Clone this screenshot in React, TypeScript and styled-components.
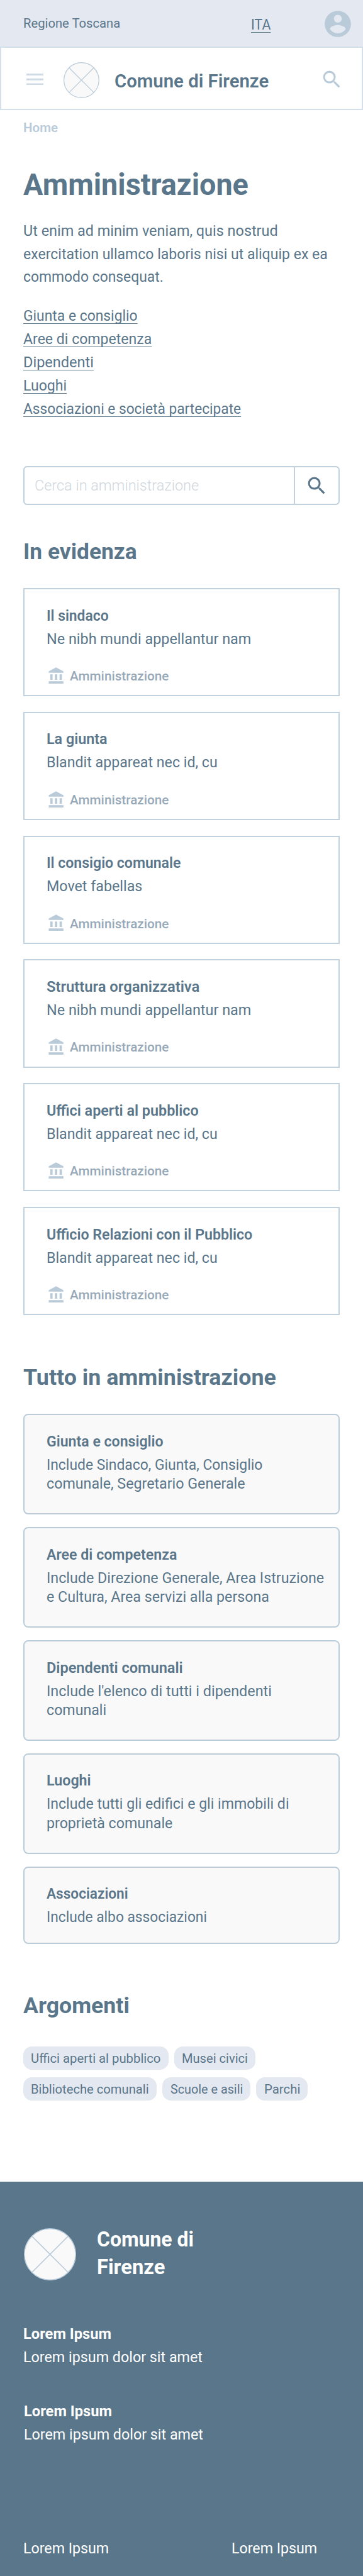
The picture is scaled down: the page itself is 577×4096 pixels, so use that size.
import React, { useLayoutEffect, useRef, useState } from "react";
import styled, { createGlobalStyle, css } from "styled-components";

/* Design units are 750 wide; the page is laid out at this fraction of that. */
const UNIT = 0.7689;
const u = (n: number) => `${+(n * UNIT).toFixed(3)}px`;

const color = {
  ink: "#5a768a",
  line: "#b9cad9",
  lineSoft: "#cedae5",
  border: "#c2d1de",
  borderSoft: "#d5dfe9",
  pale: "#e4e8f0",
  panel: "#f9f9f9",
  muted: "#97a9b8",
  placeholder: "#d0d7dd",
};

const GlobalStyle = createGlobalStyle`
  *, *::before, *::after { box-sizing: border-box; }
  html, body { margin: 0; padding: 0; background: #fff; }
  body { font-family: Roboto, "Liberation Sans", sans-serif; font-weight: 400; color: ${color.ink}; }
  h1, h2, h3, p, ul { margin: 0; padding: 0; font-weight: inherit; font-size: inherit; }
  ul { list-style: none; }
  a { color: inherit; text-decoration: none; }
  svg { display: block; flex: none; }
`;

/* ---------- condensed text line ---------- */

const LineBox = styled.span<{ $w: number }>`
  display: block;
  width: ${(p) => u(p.$w)};
  white-space: nowrap;
`;

const LineInk = styled.span<{ $underline?: boolean }>`
  display: inline-block;
  vertical-align: top;
  transform-origin: 0 50%;
  ${(p) =>
    p.$underline &&
    css`
      text-decoration: underline;
      text-decoration-thickness: 1px;
      text-underline-offset: ${u(5)};
      text-decoration-skip-ink: none;
    `}
`;

/* Condenses one line of text so that it takes exactly `w` design units. */
function Line({ w, underline, children }: { w: number; underline?: boolean; children: string }) {
  const ink = useRef<HTMLSpanElement>(null);
  const [scale, setScale] = useState(1);
  useLayoutEffect(() => {
    const natural = ink.current ? ink.current.offsetWidth : 0;
    if (natural > 0) setScale((w * UNIT) / natural);
  }, [w, children]);
  return (
    <LineBox $w={w}>
      <LineInk ref={ink} $underline={underline} style={{ transform: `scaleX(${scale})` }}>
        {children}
      </LineInk>
    </LineBox>
  );
}

/* ---------- icons ---------- */

const SearchIcon = ({ fill }: { fill: string }) => (
  <svg width={48 * UNIT} height={48 * UNIT} viewBox="0 0 24 24" fill={fill}>
    <path d="M15.5 14h-.79l-.28-.27A6.471 6.471 0 0 0 16 9.5 6.5 6.5 0 1 0 9.5 16c1.61 0 3.09-.59 4.23-1.57l.27.28v.79l5 4.99L20.49 19l-4.99-5zm-6 0C7.01 14 5 11.99 5 9.5S7.01 5 9.5 5 14 7.01 14 9.5 11.99 14 9.5 14z" />
  </svg>
);

const AccountIcon = () => (
  <svg width={65 * UNIT} height={65 * UNIT} viewBox="0 0 24 24" fill={color.line}>
    <path d="M12 2C6.48 2 2 6.48 2 12s4.48 10 10 10 10-4.48 10-10S17.52 2 12 2zm0 3c1.66 0 3 1.34 3 3s-1.34 3-3 3-3-1.34-3-3 1.34-3 3-3zm0 14.2c-2.5 0-4.71-1.28-6-3.22.03-1.99 4-3.08 6-3.08 1.99 0 5.97 1.09 6 3.08-1.29 1.94-3.5 3.22-6 3.22z" />
  </svg>
);

const MenuIcon = () => (
  <svg width={36 * UNIT} height={24 * UNIT} viewBox="0 0 36 24" fill={color.lineSoft}>
    <path d="M0 0h36v4H0zM0 10h36v4H0zM0 20h36v4H0z" />
  </svg>
);

const BankIcon = () => (
  <svg width={38.4 * UNIT} height={38.4 * UNIT} viewBox="0 0 24 24" fill={color.line}>
    <path d="M4 10v7h3v-7H4zm6 0v7h3v-7h-3zM2 22h19v-3H2v3zm14-12v7h3v-7h-3zm-4.5-9L2 6v2h19V6l-9.5-5z" />
  </svg>
);

const Emblem = ({ size, stroke }: { size: number; stroke: number }) => {
  const r = (size - stroke) / 2;
  const c = size / 2;
  const d = r * Math.SQRT1_2;
  return (
    <svg width={size * UNIT} height={size * UNIT} viewBox={`0 0 ${size} ${size}`} fill="none" stroke={color.line} strokeWidth={stroke}>
      <circle cx={c} cy={c} r={r} fill={color.panel} />
      <path d={`M${c - d} ${c - d}L${c + d} ${c + d}M${c + d} ${c - d}L${c - d} ${c + d}`} />
    </svg>
  );
};

/* ---------- layout ---------- */

const Page = styled.div`
  width: 577px;
  height: 4096px;
  overflow: hidden;
  display: flex;
  flex-direction: column;
  background: #fff;
`;

const TopBar = styled.div`
  flex: none;
  height: ${u(96)};
  padding: 0 ${u(19.5)} 0 ${u(48)};
  display: flex;
  align-items: center;
  background: ${color.pale};
`;

const Region = styled.div`
  font-size: ${u(27)};
  line-height: ${u(40)};
`;

const Language = styled.a`
  margin: ${u(7)} ${u(105.5)} 0 auto;
  font-size: ${u(30.8)};
  line-height: ${u(48)};
`;

const AccountSlot = styled.div`
  margin-top: ${u(4)};
`;

const Header = styled.header`
  flex: none;
  height: ${u(132)};
  padding: ${u(8)} ${u(37.4)} 0 ${u(51.4)};
  display: flex;
  align-items: center;
  border: 2px solid ${color.borderSoft};
`;

const MenuSlot = styled.div`
  margin: 0 ${u(41)} ${u(4)} 0;
`;

const SiteName = styled.div`
  margin: ${u(3.6)} 0 0 ${u(32)};
  font-size: ${u(38.6)};
  line-height: ${u(56)};
  font-weight: 600;
`;

const HeaderSearch = styled.div`
  margin: 0 0 ${u(4)} auto;
`;

const Main = styled.main`
  flex: none;
  padding: ${u(16.8)} ${u(48)} ${u(168)};
`;

const Breadcrumb = styled.nav`
  font-size: ${u(27)};
  line-height: ${u(40)};
  font-weight: 600;
  color: ${color.line};
`;

const Title = styled.h1`
  margin-top: ${u(58.1)};
  font-size: ${u(61.8)};
  line-height: ${u(80)};
  font-weight: 700;
`;

const Intro = styled.p`
  margin-top: ${u(30.6)};
  font-size: ${u(30.8)};
  line-height: ${u(48)};
`;

const LinkList = styled.ul`
  margin-top: ${u(32)};
  font-size: ${u(30.8)};
  line-height: ${u(48)};
`;

const SearchBox = styled.div`
  margin-top: ${u(94.5)};
  height: ${u(80)};
  display: flex;
  border: 2px solid ${color.border};
  border-radius: ${u(8)};
`;

const SearchField = styled.div`
  flex: 1;
  padding: ${u(14.4)} 0 0 ${u(21.4)};
  font-size: ${u(30.8)};
  line-height: ${u(48)};
  font-weight: 300;
  color: ${color.placeholder};
`;

const SearchButton = styled.div`
  width: ${u(92)};
  padding: ${u(14.4)} 0 0 ${u(20)};
  border-left: 2px solid ${color.border};
`;

const SectionTitle = styled.h2<{ $top: number }>`
  margin-top: ${(p) => u(p.$top)};
  font-size: ${u(46.3)};
  line-height: ${u(60)};
  font-weight: 700;
`;

const CardList = styled.div<{ $gap: number }>`
  margin-top: ${u(45.8)};
  display: flex;
  flex-direction: column;
  gap: ${(p) => u(p.$gap)};
`;

const Card = styled.article<{ $h: number; $soft?: boolean }>`
  height: ${(p) => u(p.$h)};
  padding: ${u(30.9)} 0 0 ${u(45.4)};
  border: 2px solid ${(p) => (p.$soft ? "#bccdda" : color.border)};
  border-radius: ${(p) => (p.$soft ? u(10) : "0")};
  background: ${(p) => (p.$soft ? color.panel : "#fff")};
`;

const CardTitle = styled.h3`
  font-size: ${u(30.8)};
  line-height: ${u(48)};
  font-weight: 600;
`;

const CardText = styled.p<{ $compact?: boolean }>`
  margin-top: ${(p) => (p.$compact ? u(4) : "0")};
  font-size: ${u(30.8)};
  line-height: ${(p) => u(p.$compact ? 40 : 48)};
`;

const CardMeta = styled.div`
  margin: ${u(31.4)} 0 0 ${u(1.8)};
  display: flex;
  align-items: center;
  gap: ${u(8)};
  font-size: ${u(27)};
  line-height: ${u(38.4)};
  font-weight: 500;
  color: ${color.muted};
`;

const MetaLabel = styled.div`
  margin-top: ${u(3)};
`;

const Topics = styled.div`
  margin-top: ${u(53.8)};
  display: flex;
  flex-direction: column;
  gap: ${u(16)};
`;

const TopicRow = styled.div`
  display: flex;
  gap: ${u(12)};
`;

const Topic = styled.a`
  height: ${u(48)};
  padding: 0 ${u(16)};
  border-radius: ${u(18)};
  background: ${color.pale};
  font-size: ${u(27)};
  line-height: ${u(50)};
`;

const Footer = styled.footer`
  flex: 1;
  padding: ${u(91)} ${u(48)} 0;
  background: ${color.ink};
  color: #fff;
`;

const FooterBrand = styled.div`
  display: flex;
  align-items: flex-start;
  gap: ${u(43)};
  height: ${u(114.8)};
`;

const FooterEmblem = styled.div`
  margin: ${u(5.8)} 0 0 ${u(0.8)};
`;

const FooterName = styled.div`
  font-size: ${u(42.4)};
  line-height: ${u(57.3)};
  font-weight: 700;
`;

const FooterBlock = styled.div<{ $top: number; $indent?: number }>`
  margin: ${(p) => u(p.$top)} 0 0 ${(p) => u(p.$indent ?? 0)};
  font-size: ${u(30.8)};
  line-height: ${u(48)};
`;

const FooterHeading = styled.div`
  font-weight: 700;
`;

const FooterLinks = styled.div`
  margin-top: ${u(187.6)};
  display: flex;
  gap: ${u(254)};
  font-size: ${u(30.8)};
  line-height: ${u(48)};
`;

/* ---------- content ---------- */

type Text = [string, number];

const links: Text[] = [
  ["Giunta e consiglio", 236],
  ["Aree di competenza", 266],
  ["Dipendenti", 146],
  ["Luoghi", 90],
  ["Associazioni e società partecipate", 450],
];

const featured: { title: Text; text: Text }[] = [
  { title: ["Il sindaco", 128], text: ["Ne nibh mundi appellantur nam", 423] },
  { title: ["La giunta", 125.5], text: ["Blandit appareat nec id, cu", 353] },
  { title: ["Il consigio comunale", 277], text: ["Movet fabellas", 198] },
  { title: ["Struttura organizzativa", 316], text: ["Ne nibh mundi appellantur nam", 423] },
  { title: ["Uffici aperti al pubblico", 314], text: ["Blandit appareat nec id, cu", 353] },
  { title: ["Ufficio Relazioni con il Pubblico", 425], text: ["Blandit appareat nec id, cu", 353] },
];

const sections: { title: Text; text: Text[]; height: number }[] = [
  { title: ["Giunta e consiglio", 241], text: [["Include Sindaco, Giunta, Consiglio", 446], ["comunale, Segretario Generale", 411]], height: 208 },
  { title: ["Aree di competenza", 270], text: [["Include Direzione Generale, Area Istruzione", 574], ["e Cultura, Area servizi alla persona", 460]], height: 208 },
  { title: ["Dipendenti comunali", 282], text: [["Include l'elenco di tutti i dipendenti", 465], ["comunali", 123.5]], height: 208 },
  { title: ["Luoghi", 92], text: [["Include tutti gli edifici e gli immobili di", 501], ["proprietà comunale", 261]], height: 208 },
  { title: ["Associazioni", 169], text: [["Include albo associazioni", 331]], height: 160 },
];

const topics: Text[][] = [
  [["Uffici aperti al pubblico", 268], ["Musei civici", 136]],
  [["Biblioteche comunali", 244], ["Scuole e asili", 150], ["Parchi", 74]],
];

export default function App() {
  return (
    <Page>
      <GlobalStyle />
      <TopBar>
        <Region><Line w={200}>Regione Toscana</Line></Region>
        <Language><Line w={41} underline>ITA</Line></Language>
        <AccountSlot><AccountIcon /></AccountSlot>
      </TopBar>
      <Header>
        <MenuSlot><MenuIcon /></MenuSlot>
        <Emblem size={74} stroke={1.6} />
        <SiteName><Line w={319}>Comune di Firenze</Line></SiteName>
        <HeaderSearch><SearchIcon fill={color.line} /></HeaderSearch>
      </Header>

      <Main>
        <Breadcrumb><Line w={72}>Home</Line></Breadcrumb>
        <Title><Line w={466}>Amministrazione</Line></Title>
        <Intro>
          <Line w={526}>Ut enim ad minim veniam, quis nostrud</Line>
          <Line w={629}>exercitation ullamco laboris nisi ut aliquip ex ea</Line>
          <Line w={290}>commodo consequat.</Line>
        </Intro>
        <LinkList>
          {links.map(([label, w]) => (
            <li key={label}><a><Line w={w} underline>{label}</Line></a></li>
          ))}
        </LinkList>

        <SearchBox>
          <SearchField><Line w={340}>Cerca in amministrazione</Line></SearchField>
          <SearchButton><SearchIcon fill={color.ink} /></SearchButton>
        </SearchBox>

        <SectionTitle $top={66.2}><Line w={235}>In evidenza</Line></SectionTitle>
        <CardList $gap={32}>
          {featured.map(({ title, text }) => (
            <Card key={title[0]} $h={224}>
              <CardTitle><Line w={title[1]}>{title[0]}</Line></CardTitle>
              <CardText><Line w={text[1]}>{text[0]}</Line></CardText>
              <CardMeta>
                <BankIcon />
                <MetaLabel><Line w={205}>Amministrazione</Line></MetaLabel>
              </CardMeta>
            </Card>
          ))}
        </CardList>

        <SectionTitle $top={98.2}><Line w={522}>Tutto in amministrazione</Line></SectionTitle>
        <CardList $gap={26}>
          {sections.map(({ title, text, height }) => (
            <Card key={title[0]} $h={height} $soft>
              <CardTitle><Line w={title[1]}>{title[0]}</Line></CardTitle>
              <CardText $compact>
                {text.map(([line, w]) => <Line key={line} w={w}>{line}</Line>)}
              </CardText>
            </Card>
          ))}
        </CardList>

        <SectionTitle $top={98.2}><Line w={219}>Argomenti</Line></SectionTitle>
        <Topics>
          {topics.map((row, i) => (
            <TopicRow key={i}>
              {row.map(([label, w]) => <Topic key={label}><Line w={w}>{label}</Line></Topic>)}
            </TopicRow>
          ))}
        </Topics>
      </Main>

      <Footer>
        <FooterBrand>
          <FooterEmblem><Emblem size={108} stroke={2} /></FooterEmblem>
          <FooterName>
            <Line w={200}>Comune di</Line>
            <Line w={141}>Firenze</Line>
          </FooterName>
        </FooterBrand>
        <FooterBlock $top={85.5}>
          <FooterHeading><Line w={182}>Lorem Ipsum</Line></FooterHeading>
          <Line w={371}>Lorem ipsum dolor sit amet</Line>
        </FooterBlock>
        <FooterBlock $top={64.2} $indent={2}>
          <FooterHeading><Line w={182}>Lorem Ipsum</Line></FooterHeading>
          <Line w={371}>Lorem ipsum dolor sit amet</Line>
        </FooterBlock>
        <FooterLinks>
          <Line w={177}>Lorem Ipsum</Line>
          <Line w={177}>Lorem Ipsum</Line>
        </FooterLinks>
      </Footer>
    </Page>
  );
}
